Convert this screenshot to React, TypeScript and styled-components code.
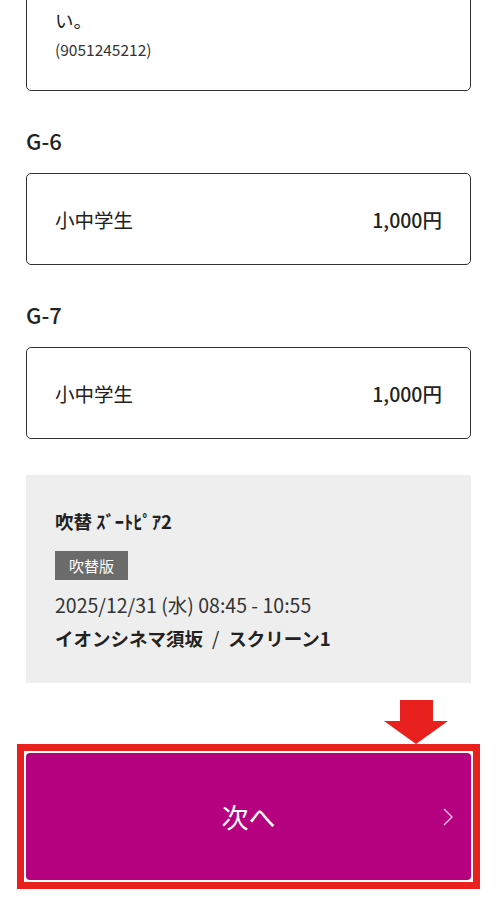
import React from 'react'
import styled, { createGlobalStyle } from 'styled-components'

const GlobalStyle = createGlobalStyle`
  body {
    margin: 0;
    background: #fff;
    font-family: "Noto Sans CJK JP", "Noto Sans", sans-serif;
    color: #222;
  }
`

const Page = styled.div`
  width: 500px;
  height: 899px;
  overflow: hidden;
  padding: 0 29px 0 26px;
  box-sizing: border-box;
`

const NoteCard = styled.div`
  margin-top: -29px;
  border: 1.5px solid #333;
  border-radius: 5px;
  padding: 33px 28px 0;
  height: 120px;
  box-sizing: border-box;
  width: 445px;
`

const NoteLine = styled.div`
  font-size: 18.5px;
  line-height: 30px;
  color: #222;
`

const NoteCode = styled.div`
  font-size: 15.5px;
  line-height: 28px;
  color: #333;
`

const SeatLabel = styled.h3`
  margin: 33px 0 17px;
  font-size: 22px;
  line-height: 32px;
  font-weight: 500;
  color: #222;
`

const TicketCard = styled.div`
  width: 445px;
  box-sizing: border-box;
  height: 92px;
  border: 1.5px solid #333;
  border-radius: 5px;
  display: flex;
  align-items: center;
  justify-content: space-between;
  padding: 0 28px;
  font-size: 19.5px;
`

const TicketType = styled.span`
  color: #222;
`

const Price = styled.span`
  font-weight: 500;
  color: #222;
`

const MovieBox = styled.div`
  margin-top: 36px;
  width: 445px;
  box-sizing: border-box;
  background: #eeeeee;
  padding: 33px 29px 31px;
  display: flex;
  flex-direction: column;
  align-items: flex-start;
`

const MovieTitle = styled.div`
  font-size: 18.5px;
  line-height: 26px;
  font-weight: 700;
  color: #222;
`

const Badge = styled.span`
  margin-top: 17px;
  background: #6b6b6b;
  color: #fff;
  font-size: 15px;
  height: 29px;
  line-height: 29px;
  padding: 0 14px;
`

const ShowTime = styled.div`
  margin-top: 11px;
  font-size: 19.5px;
  line-height: 28px;
  color: #333;
`

const Venue = styled.div`
  margin-top: 5px;
  font-size: 18.5px;
  line-height: 28px;
  font-weight: 700;
  color: #222;
`

const Slash = styled.span`
  margin: 0 9px;
  font-weight: 400;
`

const ArrowRow = styled.div`
  display: flex;
  justify-content: flex-end;
  margin-top: 17px;
  padding-right: 22px;
  width: 445px;
  box-sizing: border-box;
  height: 44px;
`

const HighlightFrame = styled.div`
  margin-left: -9px;
  width: 463px;
  box-sizing: border-box;
  border: 7px solid #e8211f;
  padding: 2px;
`

const NextButton = styled.button`
  display: grid;
  grid-template-columns: 1fr auto 1fr;
  align-items: center;
  width: 445px;
  height: 127px;
  border: none;
  border-radius: 4px;
  background: #b5007f;
  color: #fff;
  font-family: inherit;
  font-size: 27px;
  font-weight: 400;
  padding: 0 17px 0 0;
  cursor: pointer;
`

const ButtonLabel = styled.span`
  grid-column: 2;
  padding-left: 17px;
`

const Chevron = styled.svg`
  grid-column: 3;
  justify-self: end;
`

export default function App() {
  return (
    <>
      <GlobalStyle />
      <Page>
        <NoteCard>
          <NoteLine>い。</NoteLine>
          <NoteCode>(9051245212)</NoteCode>
        </NoteCard>

        <SeatLabel>G-6</SeatLabel>
        <TicketCard>
          <TicketType>小中学生</TicketType>
          <Price>1,000円</Price>
        </TicketCard>

        <SeatLabel>G-7</SeatLabel>
        <TicketCard>
          <TicketType>小中学生</TicketType>
          <Price>1,000円</Price>
        </TicketCard>

        <MovieBox>
          <MovieTitle>吹替 ｽﾞｰﾄﾋﾟｱ2</MovieTitle>
          <Badge>吹替版</Badge>
          <ShowTime>2025/12/31 (水) 08:45 - 10:55</ShowTime>
          <Venue>
            イオンシネマ須坂<Slash>/</Slash>スクリーン1
          </Venue>
        </MovieBox>

        <ArrowRow>
          <svg width="66" height="44" viewBox="0 0 66 44">
            <polygon points="17,0 50,0 50,21 65,21 33,44 1,21 17,21" fill="#e8211f" />
          </svg>
        </ArrowRow>

        <HighlightFrame>
          <NextButton>
            <ButtonLabel>次へ</ButtonLabel>
            <Chevron width="12" height="18" viewBox="0 0 12 18">
              <polyline points="2,1 10,9 2,17" fill="none" stroke="#f4c6e4" strokeWidth="1.4" />
            </Chevron>
          </NextButton>
        </HighlightFrame>
      </Page>
    </>
  )
}
